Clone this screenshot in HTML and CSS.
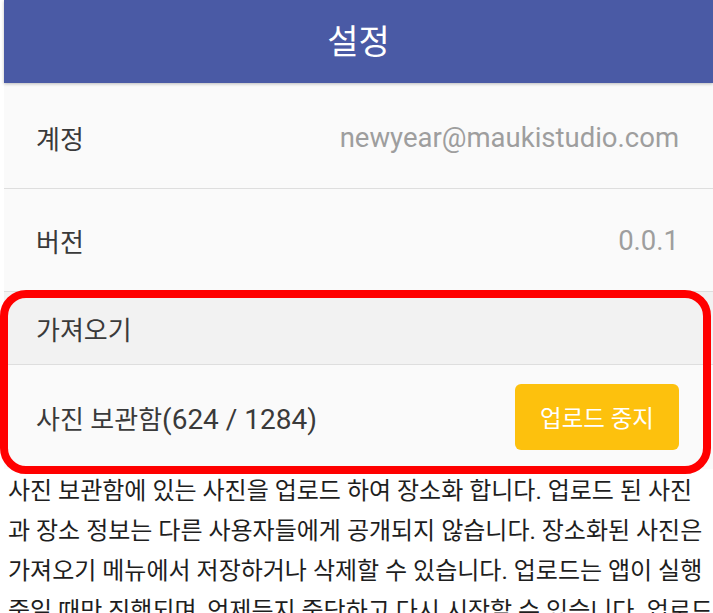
FILE: index.html
```html
<!DOCTYPE html>
<html lang="ko">
<head>
<meta charset="utf-8">
<title>설정</title>
<link rel="stylesheet" href="styles.css">
</head>
<body>
<div class="app">
  <header class="appbar"><h1 class="title">설정</h1></header>
  <div class="list">
    <div class="row">
      <span class="label">계정</span>
      <span class="value">newyear@maukistudio.com</span>
    </div>
    <div class="row">
      <span class="label">버전</span>
      <span class="value">0.0.1</span>
    </div>
    <div class="section">
      <div class="section-head"><span class="label">가져오기</span></div>
      <div class="row row-last">
        <span class="label">사진 보관함<span class="num">(624 / 1284)</span></span>
        <button class="btn">업로드 중지</button>
      </div>
      <div class="highlight"></div>
    </div>
  </div>
</div>
<div class="desc">
  <p class="line">사진 보관함에 있는 사진을 업로드 하여 장소화 합니다. 업로드 된 사진</p>
  <p class="line">과 장소 정보는 다른 사용자들에게 공개되지 않습니다. 장소화된 사진은</p>
  <p class="line">가져오기 메뉴에서 저장하거나 삭제할 수 있습니다. 업로드는 앱이 실행</p>
  <p class="line">중일 때만 진행되며, 언제든지 중단하고 다시 시작할 수 있습니다. 업로드</p>
</div>
</body>
</html>
```

FILE: styles.css
```css
html, body {
  margin: 0;
  padding: 0;
  background: #ffffff;
  overflow: hidden;
}
body {
  font-family: Roboto, "Noto Sans CJK KR", sans-serif;
  width: 713px;
}
.app {
  margin-left: 4px;
  background: #fafafa;
}
.appbar {
  height: 83px;
  background: #4a5aa5;
  display: flex;
  align-items: center;
  justify-content: center;
  box-shadow: 0 1px 3px rgba(0,0,0,0.25);
  position: relative;
  z-index: 1;
}
.title {
  margin: 0;
  color: #ffffff;
  font-weight: 400;
  font-size: 34px;
  line-height: 1;
}
.list {
  padding-top: 3px;
}
.row {
  height: 102px;
  display: flex;
  align-items: center;
  justify-content: space-between;
  padding: 0 34px 0 32px;
  border-bottom: 1px solid #dedede;
  background: #fafafa;
}
.label {
  font-size: 26px;
  color: #3a3a3a;
}
.num {
  font-size: 28px;
}
.value {
  font-size: 27.5px;
  color: #9e9e9e;
}
.section {
  position: relative;
}
.section-head {
  height: 72px;
  display: flex;
  align-items: center;
  padding: 0 32px;
  background: #f2f2f2;
  border-bottom: 1px solid #dedede;
}
.row-last {
  border-bottom: none;
  height: 104px;
}
.btn {
  width: 164px;
  height: 66px;
  border: none;
  border-radius: 6px;
  background: #fdc10d;
  color: #ffffff;
  font-family: inherit;
  font-size: 23.5px;
  padding: 0;
}
.highlight {
  position: absolute;
  left: -4px;
  right: 2px;
  top: -2px;
  bottom: -5px;
  border: 8px solid #ff0000;
  border-radius: 26px;
  pointer-events: none;
}
.desc {
  padding: 2px 0 0 8px;
}
.line {
  margin: 0;
  white-space: nowrap;
  font-size: 24px;
  line-height: 40px;
  color: #1e1e1e;
}
```
